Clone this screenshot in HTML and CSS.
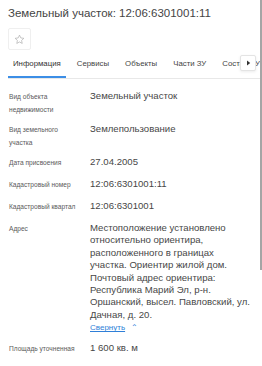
FILE: index.html
```html
<!DOCTYPE html>
<html lang="ru">

<head>
    <meta charset="UTF-8" />
    <meta name="viewport" content="width=device-width, initial-scale=1.0" />
    <title>Земельный участок</title>
    <link rel="stylesheet" href="styles.css">
</head>

<body>
    <div class="card">
        <h1 class="title">Земельный участок: 12:06:6301001:11</h1>

        <button class="fav" type="button" aria-label="В избранное">
            <svg width="11" height="11" viewBox="0 0 24 24" fill="none" stroke="#a8a8a8" stroke-width="1.4"
                stroke-linejoin="round">
                <path d="M12 2.5l2.9 6.1 6.6.8-4.9 4.6 1.3 6.6L12 17.3l-5.9 3.3 1.3-6.6-4.9-4.6 6.6-.8z" />
            </svg>
        </button>

        <nav class="tabs">
            <div class="tabs-track">
                <a class="tab active">Информация</a>
                <a class="tab">Сервисы</a>
                <a class="tab">Объекты</a>
                <a class="tab">Части ЗУ</a>
                <a class="tab">Состав ЗУ</a>
            </div>
            <button class="tabs-next" type="button" aria-label="Далее">
                <svg width="5" height="6" viewBox="0 0 5 6"><path d="M1 0.5L4.2 3 1 5.5z" fill="#333" /></svg>
            </button>
        </nav>

        <div class="props">
            <div class="row">
                <div class="label">Вид объекта недвижимости</div>
                <div class="value">Земельный участок</div>
            </div>
            <div class="row">
                <div class="label">Вид земельного участка</div>
                <div class="value">Землепользование</div>
            </div>
            <div class="row">
                <div class="label">Дата присвоения</div>
                <div class="value">27.04.2005</div>
            </div>
            <div class="row">
                <div class="label">Кадастровый номер</div>
                <div class="value">12:06:6301001:11</div>
            </div>
            <div class="row">
                <div class="label">Кадастровый квартал</div>
                <div class="value">12:06:6301001</div>
            </div>
            <div class="row">
                <div class="label">Адрес</div>
                <div class="value">
                    Местоположение установлено относительно ориентира, расположенного в границах участка.
                    Ориентир жилой дом. Почтовый адрес ориентира: Республика Марий Эл, р-н. Оршанский,
                    высел. Павловский, ул. Дачная, д. 20.
                    <div class="collapse"><a href="#">Свернуть</a> <span class="caret">&#8963;</span></div>
                </div>
            </div>
            <div class="row">
                <div class="label">Площадь уточненная</div>
                <div class="value">1 600 кв. м</div>
            </div>
        </div>
    </div>

    <div class="scrollbar"></div>
</body>

</html>
```

FILE: styles.css
```css
* {
    margin: 0;
    padding: 0;
    box-sizing: border-box;
}

body {
    font-family: 'Liberation Sans', Arial, sans-serif;
    background: #fff;
    color: #333;
    width: 262px;
    height: 366px;
    overflow: hidden;
    position: relative;
}

.card {
    padding: 6px 0 0 8px;
}

.title {
    font-size: 11.5px;
    font-weight: normal;
    line-height: 14px;
    color: #444;
}

.fav {
    display: flex;
    align-items: center;
    justify-content: center;
    width: 23px;
    height: 22px;
    margin-top: 8px;
    background: #fff;
    border: 1px solid #efefef;
    border-radius: 2px;
}

.tabs {
    position: relative;
    margin-top: 7px;
    border-bottom: 1px solid #e8e8e8;
}

.tabs-track {
    display: flex;
    gap: 6px;
    overflow: hidden;
    white-space: nowrap;
}

.tab {
    flex: none;
    padding: 2px 5px 7px;
    font-size: 7.8px;
    line-height: 10px;
    color: #444;
    border-bottom: 2px solid transparent;
}

.tab.active {
    color: #333;
    border-bottom-color: #3c8ee6;
}

.tabs-next {
    position: absolute;
    right: 6px;
    top: -2px;
    width: 16px;
    height: 16px;
    display: flex;
    align-items: center;
    justify-content: center;
    background: #fff;
    border: 1px solid #e4e4e4;
    border-radius: 2px;
    box-shadow: 0 1px 3px rgba(0, 0, 0, 0.08);
}

.props {
    padding-top: 7px;
    padding-right: 10px;
}

.row {
    display: flex;
    padding: 3.5px 0;
}

.label {
    flex: none;
    width: 82px;
    padding-left: 1px;
    padding-right: 8px;
    font-size: 6.6px;
    line-height: 13px;
    color: #5a5a5a;
}

.value {
    flex: 1;
    min-height: 15px;
    padding-top: 0.5px;
    font-size: 9.6px;
    line-height: 12.4px;
    color: #474747;
}

.collapse a {
    color: #2f7fd8;
    font-size: 8px;
    text-decoration: underline;
}

.caret {
    color: #2f7fd8;
    font-size: 8px;
    margin-left: 3px;
}

.scrollbar {
    position: absolute;
    right: 0;
    top: 0;
    width: 2px;
    height: 270px;
    background: #a5a5a5;
}
```
